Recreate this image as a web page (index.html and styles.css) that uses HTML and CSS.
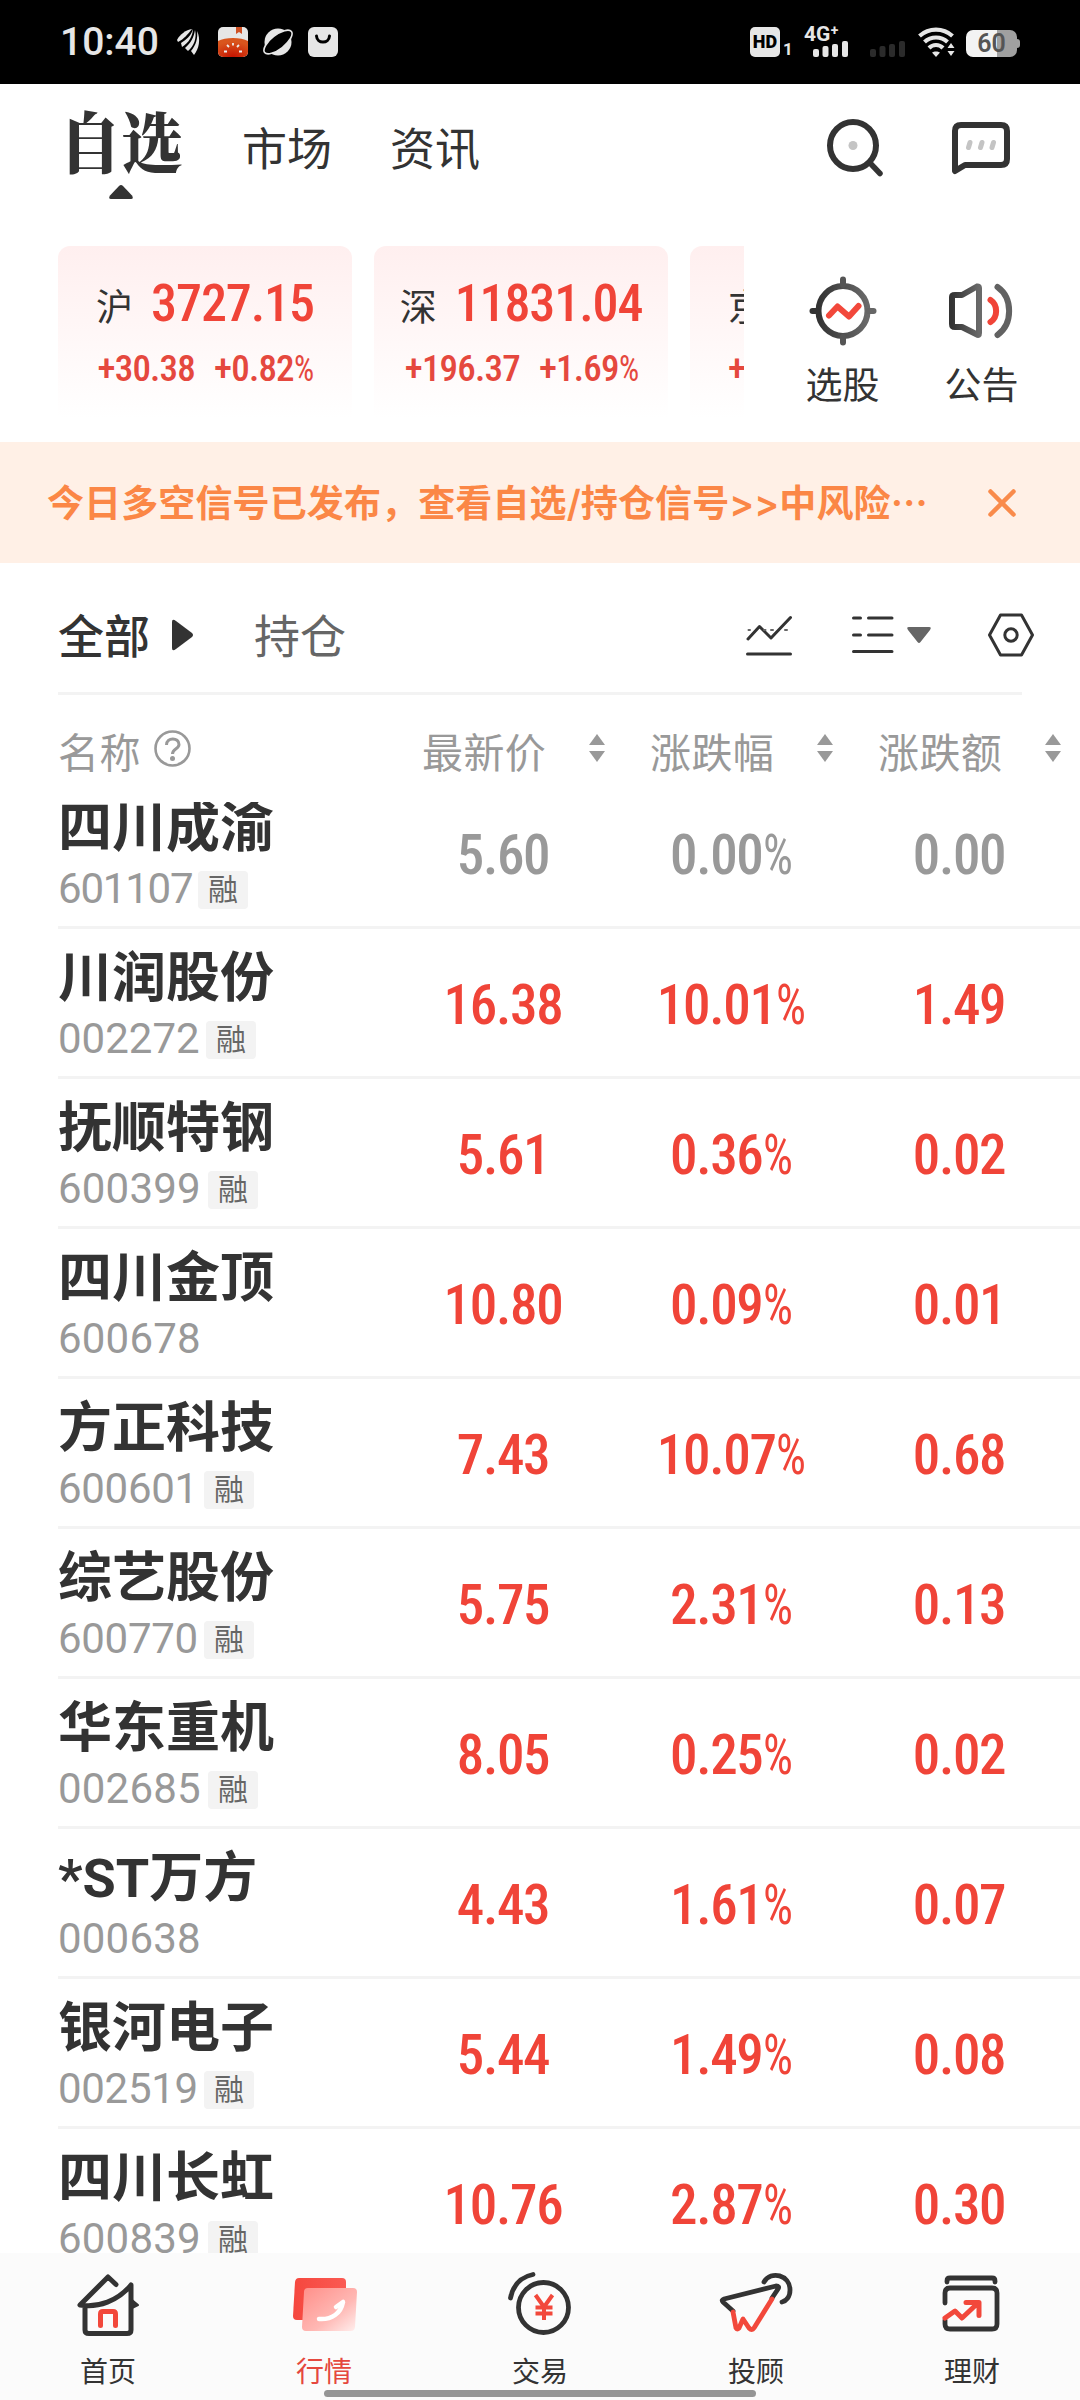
FILE: index.html
```html
<!DOCTYPE html>
<html lang="zh-CN">
<head>
   <meta charset="utf-8">
   <meta content="width=device-width, initial-scale=1.0" name="viewport">
   <title>自选</title>
   <link rel="stylesheet" href="styles.css">
</head>
<body>
   <div class="status">
      <span class="time">10:40</span>
      <svg class="s-bird" width="24" height="28" viewBox="0 0 24 28" fill="#e6e6e6">
         <path d="M0 12C3 6 9 2 15 1C11 6 7 11 1 14Z"/>
         <path d="M16 1C16 7 12 15 5 19L4 15C9 12 14 8 16 1Z"/>
         <path d="M18 2C20 10 17 18 11 23L8 20C14 15 17 9 18 2Z"/>
         <path d="M20 3C24 11 22 21 17 27L14 23C19 17 21 10 20 3Z"/>
      </svg>
      <svg class="s-book" width="30" height="30" viewBox="0 0 30 30">
         <defs>
            <radialGradient id="tomato" cx=".5" cy="1" r=".8"><stop offset="0" stop-color="#c41200"/><stop offset="1" stop-color="#d9551d"/></radialGradient>
            <clipPath id="bookclip"><rect width="30" height="30" rx="5"/></clipPath>
         </defs>
         <g clip-path="url(#bookclip)">
            <rect width="30" height="30" fill="#e6e6e6"/>
            <path d="M18 0H24V7L21 5L18 7Z" fill="#cf5124"/>
            <path d="M0 14C7 10 23 10 30 14V30H0Z" fill="url(#tomato)"/>
            <path d="M15 16V18.500M9 18L11 20M21 18L19 20M6 24.500H9M24 24.500H21" stroke="#eee" stroke-width="1.800"/>
         </g>
      </svg>
      <svg class="s-planet" width="30" height="28" viewBox="0 0 30 28">
         <circle cx="15" cy="14" r="13.500" fill="#e6e6e6"/>
         <ellipse cx="15" cy="14" rx="17" ry="7" transform="rotate(-38 15 14)" fill="#000" stroke="#e6e6e6" stroke-width="1.600"/>
      </svg>
      <svg class="s-bag" width="30" height="30" viewBox="0 0 30 30">
         <rect width="30" height="30" rx="6" fill="#e6e6e6"/>
         <path d="M8.500 9C9 17 21 17 21.500 9" fill="none" stroke="#000" stroke-width="3" stroke-linecap="round"/>
      </svg>
      <div class="status-right">
         <span class="hd">HD</span>
         <span class="sim">1</span>
         <div class="signal">
            <span>4G⁺</span>
            <svg width="35" height="16" viewBox="0 0 35 16" fill="#e6e6e6"><rect y="8" width="6" height="8" rx="2"/><rect x="9.500" y="5" width="6" height="11" rx="2"/><rect x="19" y="3" width="6" height="13" rx="2"/><rect x="29" width="6" height="16" rx="2"/></svg>
         </div>
         <svg class="s-dim" width="35" height="16" viewBox="0 0 35 16" fill="#2b2b2b"><rect y="8" width="6" height="8" rx="2"/><rect x="9.500" y="5" width="6" height="11" rx="2"/><rect x="19" y="3" width="6" height="13" rx="2"/><rect x="29" width="6" height="16" rx="2"/></svg>
         <svg class="s-wifi" width="37" height="30" viewBox="0 0 37 30">
            <g fill="none" stroke="#e6e6e6" stroke-width="4.200">
               <path d="M1.500 9C11 0.500 25 0.500 34.500 9"/>
               <path d="M6.500 15C13 9 23 9 29.500 15"/>
               <path d="M11 21C15 17 21 17 25 21"/>
            </g>
            <path d="M14 25.500C16 24 20 24 22 25.500L18 30Z" fill="#e6e6e6"/>
            <path d="M28 20L32.500 13L37 20V30H28Z" fill="#000"/>
            <path d="M29.500 21L33 16L36.500 21ZM29.500 24H36.500L33 29Z" fill="#e6e6e6"/>
         </svg>
         <div class="battery"><span>60</span></div>
         <i class="battery-tip"></i>
      </div>
   </div>

   <div class="nav">
      <div class="nav-item active">
         <span class="nav-title">自选</span>
         <svg width="24" height="14" viewBox="0 0 24 14"><path d="M10 1Q12-1 14 1L23 10.500Q25 14 22 14H2Q-1 14 1 10.500Z" fill="#333"/></svg>
      </div>
      <span class="nav-item market">市场</span>
      <span class="nav-item news">资讯</span>
      <svg class="search" width="60" height="62" viewBox="0 0 60 62" fill="none" stroke="#333" stroke-width="6">
         <ellipse cx="27" cy="28.500" rx="23" ry="23.500"/>
         <path d="M45 47L54 56.500" stroke-width="5.500" stroke-linecap="round"/>
         <circle cx="27" cy="28.500" r="4.500" fill="#c4c4c4" stroke="none"/>
      </svg>
      <svg class="chat" width="60" height="54" viewBox="0 0 60 54" fill="none" stroke="#333" stroke-width="6" stroke-linejoin="round">
         <path d="M4 50V10Q4 4 10 4H50Q56 4 56 10V38Q56 44 50 44H14Z"/>
         <path d="M19 21.500L17.500 26.500M31 21.500L29.500 26.500M42.500 21.500L41 26.500" stroke="#c4c4c4" stroke-width="5" stroke-linecap="round"/>
      </svg>
   </div>

   <div class="indices">
      <div class="cards">
         <div class="card">
            <div class="card-top"><span class="label">沪</span><span class="num point">3727.15</span></div>
            <div class="card-sub"><span class="num">+30.38</span><span class="num">+0.82<u>%</u></span></div>
         </div>
         <div class="card">
            <div class="card-top"><span class="label">深</span><span class="num point">11831.04</span></div>
            <div class="card-sub"><span class="num">+196.37</span><span class="num">+1.69<u>%</u></span></div>
         </div>
         <div class="card cut">
            <div class="card-top"><span class="label">京</span></div>
            <div class="card-sub"><span class="num">+</span></div>
         </div>
      </div>
      <div class="tool">
         <svg width="68" height="70" viewBox="0 0 68 70" fill="none" stroke-width="6" stroke-linecap="round">
            <defs><linearGradient id="ink"><stop offset="0" stop-color="#333"/><stop offset="1" stop-color="#6a6a6a"/></linearGradient></defs>
            <ellipse cx="34" cy="35" rx="24.500" ry="25" stroke="url(#ink)"/>
            <path d="M34 3.500V9M34 61V66.500" stroke="#555"/><path d="M3.500 35H8" stroke="#333"/><path d="M60 35H64.500" stroke="#666"/>
            <path d="M20 39.500L28.500 30.500L40 40.500L49.500 30" stroke="#f2483b" stroke-linejoin="round"/>
         </svg>
         <span>选股</span>
      </div>
      <div class="tool">
         <svg width="68" height="70" viewBox="0 0 68 70" fill="none" stroke-width="6" stroke-linecap="round" stroke-linejoin="round">
            <path d="M4 21Q4 19 7 19H14L29 10.500Q31 10 31 12V57Q31 60 29 58.500L14 51H7Q4 51 4 48Z" stroke="url(#ink)"/>
            <path d="M42.500 24C50 29 50 41 42.500 46" stroke="#f04438"/>
            <path d="M49.500 11C65 22 65 48 49.500 59" stroke="#626262"/>
         </svg>
         <span>公告</span>
      </div>
   </div>

   <div class="notice">
      <span>今日多空信号已发布，查看自选/持仓信号&gt;&gt;中风险<bdi>…</bdi></span>
      <svg width="28" height="28" viewBox="0 0 28 28" stroke="#f98b4b" stroke-width="4.500" stroke-linecap="round"><path d="M2.500 2.500L25.500 25.500M25.500 2.500L2.500 25.500"/></svg>
   </div>

   <div class="filter">
      <span class="all">全部</span>
      <svg class="play" width="21" height="32" viewBox="0 0 21 32"><path d="M0 3Q0-1 4 2L20 14Q22 16 20 18L4 30Q0 33 0 29Z" fill="#333"/></svg>
      <span class="hold">持仓</span>
      <svg class="chart" width="46" height="42" viewBox="0 0 46 42" fill="none" stroke="#333" stroke-width="3" stroke-linecap="round" stroke-linejoin="round">
         <path d="M1.500 40H44.500M2 25L13.500 12.500L25 24L44.500 3.500"/>
         <path d="M2.500 16H4M18 16H19.500M25 16H27M39 16H41" stroke="#666" stroke-width="2"/>
      </svg>
      <svg class="list" width="42" height="40" viewBox="0 0 42 40" stroke="#333" stroke-width="3" stroke-linecap="round"><path d="M1.500 3H8.500M16.500 3H40M1.500 20H8.500M16.500 20H40M1.500 36.500H40"/></svg>
      <svg class="down" width="24" height="17" viewBox="0 0 24 17"><path d="M2 0H22Q25 0 23 3L13.500 15Q12 17 10.500 15L1 3Q-1 0 2 0Z" fill="#666"/></svg>
      <svg class="hex" width="46" height="44" viewBox="0 0 46 44" fill="none" stroke="#333" stroke-width="3" stroke-linejoin="round"><path d="M12.500 2H33.500L44.500 22L33.500 42H12.500L1.500 22Z"/><circle cx="23" cy="22" r="6.200"/></svg>
   </div>

   <div class="thead">
      <div class="th-name"><span>名称</span>
         <svg width="37" height="37" viewBox="0 0 37 37" fill="none" stroke="#999" stroke-width="2.600"><circle cx="18.500" cy="18.500" r="17"/><path d="M12.500 15C12.500 7 25 7 25 14.500C25 19 18.500 18.500 18.500 24" stroke-width="3"/><circle cx="18.500" cy="28.500" r="2.500" fill="#999" stroke="none"/></svg>
      </div>
      <div class="th"><span>最新价</span><i class="sort"></i></div>
      <div class="th"><span>涨跌幅</span><i class="sort"></i></div>
      <div class="th"><span>涨跌额</span><i class="sort"></i></div>
   </div>

   <div class="list-wrap">
      <div class="row flat first">
         <div class="stock"><b>四川成渝</b><p><span class="code c198">601107</span><em>融</em></p></div>
         <span class="num">5.60</span><span class="num">0.00<u>%</u></span><span class="num">0.00</span>
      </div>
      <div class="row">
         <div class="stock"><b>川润股份</b><p><span class="code c206">002272</span><em>融</em></p></div>
         <span class="num">16.38</span><span class="num">10.01<u>%</u></span><span class="num">1.49</span>
      </div>
      <div class="row">
         <div class="stock"><b>抚顺特钢</b><p><span class="code">600399</span><em>融</em></p></div>
         <span class="num">5.61</span><span class="num">0.36<u>%</u></span><span class="num">0.02</span>
      </div>
      <div class="row">
         <div class="stock"><b>四川金顶</b><p><span class="code">600678</span></p></div>
         <span class="num">10.80</span><span class="num">0.09<u>%</u></span><span class="num">0.01</span>
      </div>
      <div class="row">
         <div class="stock"><b>方正科技</b><p><span class="code c204">600601</span><em>融</em></p></div>
         <span class="num">7.43</span><span class="num">10.07<u>%</u></span><span class="num">0.68</span>
      </div>
      <div class="row">
         <div class="stock"><b>综艺股份</b><p><span class="code c204">600770</span><em>融</em></p></div>
         <span class="num">5.75</span><span class="num">2.31<u>%</u></span><span class="num">0.13</span>
      </div>
      <div class="row">
         <div class="stock"><b>华东重机</b><p><span class="code">002685</span><em>融</em></p></div>
         <span class="num">8.05</span><span class="num">0.25<u>%</u></span><span class="num">0.02</span>
      </div>
      <div class="row">
         <div class="stock"><b>*ST万方</b><p><span class="code">000638</span></p></div>
         <span class="num">4.43</span><span class="num">1.61<u>%</u></span><span class="num">0.07</span>
      </div>
      <div class="row">
         <div class="stock"><b>银河电子</b><p><span class="code c204">002519</span><em>融</em></p></div>
         <span class="num">5.44</span><span class="num">1.49<u>%</u></span><span class="num">0.08</span>
      </div>
      <div class="row">
         <div class="stock"><b>四川长虹</b><p><span class="code">600839</span><em>融</em></p></div>
         <span class="num">10.76</span><span class="num">2.87<u>%</u></span><span class="num">0.30</span>
      </div>
   </div>

   <div class="tabbar">
      <div class="tab">
         <svg width="76" height="76" viewBox="0 0 76 76" fill="none" stroke="#333" stroke-width="5" stroke-linecap="round" stroke-linejoin="round">
            <path d="M46 19.500L38 12L10 40C28 43 48 36 61 20V65Q61 68.500 57 68.500H19Q15 68.500 15 65V42"/>
            <path d="M62 35L68 40L62 43Z" fill="#333" stroke-width="2"/>
            <path d="M30.500 60.500V49Q30.500 46.500 33 46.500H43Q45.500 46.500 45.500 49V60.500" stroke="#f2483b"/>
         </svg>
         <span>首页</span>
      </div>
      <div class="tab on">
         <svg width="76" height="76" viewBox="0 0 76 76">
            <defs>
               <linearGradient id="front" x1="0" y1="0" x2="1" y2="1"><stop offset="0" stop-color="#ff8f89"/><stop offset=".6" stop-color="#ffb8b4"/><stop offset="1" stop-color="#fff0ef"/></linearGradient>
               <linearGradient id="back" x1="0" y1="0" x2="1" y2="0"><stop offset="0" stop-color="#f5473e"/><stop offset="1" stop-color="#fb5a53"/></linearGradient>
            </defs>
            <path d="M13 13H56Q60 13 60 17V55H11Q7 55 7 51L9 17Q9.500 13 13 13Z" fill="url(#back)"/>
            <path d="M22 23H67Q71 23 71 27L69 62Q68.500 66 65 66H20Q16 66 16 62L18 27Q18 23 22 23Z" fill="url(#front)"/>
            <path d="M33 54C46 55 55 48 57 37M57 37L50 42" fill="none" stroke="#fff" stroke-width="4.500" stroke-linecap="round"/>
         </svg>
         <span>行情</span>
      </div>
      <div class="tab">
         <svg width="76" height="76" viewBox="0 0 76 76" fill="none" stroke="#333" stroke-width="4.800" stroke-linecap="round">
            <circle cx="41.500" cy="42.500" r="25"/><path d="M8.500 33C11 20 19 12 31 9.500"/>
            <path d="M33.500 30L42 42L50.500 30M42 42V55M33.500 42.500H50.500M33.500 48.500H50.500" stroke="#f2483b" stroke-width="4" stroke-linecap="butt"/>
         </svg>
         <span>交易</span>
      </div>
      <div class="tab">
         <svg width="76" height="76" viewBox="0 0 76 76" fill="none" stroke="#333" stroke-width="4.800" stroke-linecap="round" stroke-linejoin="round">
            <path d="M15 46L5 37Q3 35 6 34L58 21Q62 21 60 24L54 33"/>
            <path d="M15 47L18 63Q19 65 21 63L25 54L31 63Q34 66 36 63L54 34" stroke="#f2483b"/>
            <path d="M46 17C53 5 72 10 72 25C72 32 68 36 64 37"/>
         </svg>
         <span>投顾</span>
      </div>
      <div class="tab">
         <svg width="76" height="76" viewBox="0 0 76 76" fill="none" stroke="#333" stroke-width="4.800" stroke-linecap="round" stroke-linejoin="round">
            <path d="M13 17V16Q13 13 16 13H58Q61 13 61 16V17M11 38V28Q11 23 16 23H58Q63 23 63 28V59Q63 64 58 64H16Q11 64 11 59V55"/>
            <path d="M11 53L21 46L28 53L44 38M32 37.500H45V50.500" stroke="#f2483b" stroke-width="5"/>
         </svg>
         <span>理财</span>
      </div>
      <i class="home-bar"></i>
   </div>
</body>
</html>
```
FILE: styles.css
```css
* {
    margin: 0;
    padding: 0;
    box-sizing: border-box;
}
body {
    width: 1080px;
    height: 2400px;
    overflow: hidden;
    background: #fff;
    color: #333;
    font-family: Roboto, "Noto Sans CJK SC", sans-serif;
}
svg {
    display: block;
    flex: none;
}
i, em {
    font-style: normal;
}
.num {
    font-stretch: 75%;
    font-weight: 500;
    letter-spacing: -1.1px;
    color: #f04438;
    white-space: nowrap;
}

/* status bar */
.status {
    height: 84px;
    background: #000;
    color: #e6e6e6;
    display: flex;
    align-items: center;
    padding-left: 60px;
}
.time {
    font-size: 39px;
    font-weight: 500;
    width: 117px;
}
.s-book {
    margin-left: 17px;
}
.s-planet, .s-bag {
    margin-left: 15px;
}
.status-right {
    display: flex;
    align-items: flex-end;
    height: 30px;
    margin-left: auto;
    padding-right: 60px;
}
.hd {
    width: 30px;
    height: 30px;
    border-radius: 5px;
    background: #e6e6e6;
    color: #000;
    font-size: 18px;
    font-weight: 900;
    line-height: 30px;
    text-align: center;
}
.sim {
    font-size: 17px;
    font-weight: 700;
    line-height: 15px;
    width: 24px;
    padding-left: 3px;
}
.signal span {
    display: block;
    font-size: 21px;
    font-weight: 700;
    line-height: 14px;
    height: 14px;
}
.signal {
    width: 44px;
}
.signal svg {
    margin-left: 9px;
}
.s-dim {
    margin-left: 22px;
}
.s-wifi {
    margin-left: 13px;
}
.battery {
    width: 51px;
    height: 27px;
    margin-left: 11px;
    border-radius: 7px;
    background: linear-gradient(90deg, #f3f3f3 61%, #a0a0a0 61%);
    color: #555;
    font-size: 25px;
    font-weight: 600;
    line-height: 28px;
    text-align: center;
}
.battery-tip {
    width: 3px;
    height: 9px;
    margin-bottom: 9px;
    background: #a0a0a0;
    border-radius: 0 3px 3px 0;
}

/* top navigation */
.nav {
    height: 162px;
    display: flex;
    align-items: flex-start;
    padding-left: 64px;
}
.nav-item {
    font-size: 45px;
    line-height: 60px;
}
.active {
    width: 114px;
    display: flex;
    flex-direction: column;
    align-items: center;
}
.nav-title {
    font-family: "Noto Serif CJK SC", "Noto Sans CJK SC", serif;
    font-size: 67px;
    font-weight: 900;
    line-height: 80px;
    white-space: nowrap;
    transform: scaleX(.92);
    margin: 15px 0 6px;
}
.market, .news {
    margin: 37px 0 0 64px;
}
.news {
    margin-left: 58px;
}
.search {
    margin: 33px 0 0 auto;
}
.chat {
    margin: 37px 69px 0 65px;
}

/* index cards */
.indices {
    height: 196px;
    display: flex;
    padding-left: 58px;
}
.cards {
    width: 686px;
    display: flex;
    gap: 22px;
    overflow: hidden;
    margin-right: 29px;
}
.card {
    flex: none;
    width: 294px;
    height: 181px;
    border-radius: 12px;
    background: linear-gradient(#ffefef, #fff 95%);
}
.card-top {
    height: 80px;
    padding-top: 34px;
    display: flex;
    justify-content: center;
    align-items: center;
    gap: 18px;
}
.label {
    font-size: 37px;
    padding-top: 4px;
}
.point {
    font-size: 52px;
}
.card-sub {
    display: flex;
    justify-content: center;
    gap: 19px;
    padding-top: 21px;
    font-size: 37px;
    line-height: 44px;
}
.card-sub .num {
    color: #e5483e;
    letter-spacing: -.8px;
}
.cut .card-top, .cut .card-sub {
    justify-content: flex-start;
    padding-left: 38px;
}
.tool {
    width: 139px;
    padding-top: 30px;
    display: flex;
    flex-direction: column;
    align-items: center;
    font-size: 37px;
    line-height: 54px;
}
.tool svg {
    margin-bottom: 14px;
}

/* notice */
.notice {
    height: 121px;
    background: #fff0e6;
    display: flex;
    align-items: center;
    justify-content: space-between;
    padding: 0 64px 0 47px;
    font-family: Inter, "Noto Sans CJK SC", sans-serif;
    font-size: 37px;
    font-weight: 600;
    letter-spacing: .12px;
    color: #fb8746;
}
.notice span {
    margin-top: -3px;
}
.notice bdi {
    font-family: "Noto Sans CJK SC", sans-serif;
}

/* filter row */
.filter {
    height: 132px;
    margin: 0 0 0 58px;
    padding-top: 12px;
    display: flex;
    align-items: center;
    font-size: 46px;
    background: linear-gradient(#f3f3f3, #f3f3f3) 0 129px / 964px 3px no-repeat;
}
.all, .hold {
    margin-top: -4px;
}
.all {
    font-weight: 500;
}
.play {
    margin: 0 61px 0 22px;
}
.hold {
    color: #666;
}
.chart {
    margin-left: auto;
}
.list {
    margin-left: 60px;
}
.down {
    margin-left: 13px;
}
.hex {
    margin: 0 46px 0 57px;
}

/* table head */
.thead {
    height: 107px;
    padding-left: 58px;
    display: flex;
    font-size: 41px;
    color: #999;
}
.th-name {
    flex: none;
    width: 364px;
    display: flex;
    align-items: center;
    gap: 13px;
}
.thead span {
    padding-top: 3px;
    letter-spacing: .4px;
}
.th-name svg {
    margin-bottom: 1px;
}
.th {
    flex: none;
    width: 228px;
    display: flex;
    align-items: center;
}
.sort {
    margin: 0 0 2px 43px;
}
.sort::before, .sort::after {
    content: "";
    display: block;
    border: 8px solid transparent;
    border-top-width: 0;
    border-bottom: 11px solid #999;
}
.sort::after {
    margin-top: 6px;
    border-bottom-width: 0;
    border-top: 11px solid #999;
}

/* stock rows */
.list-wrap {
    height: 1451px;
    overflow: hidden;
}
.row {
    height: 150px;
    margin-left: 58px;
    border-bottom: 3px solid #f3f3f3;
    display: flex;
}
.first {
    margin-top: -23px;
}
.row .num {
    width: 228px;
    font-size: 55px;
    line-height: 153px;
    letter-spacing: -1.3px;
    text-align: center;
}
.flat .num {
    color: #999;
}
.num u {
    text-decoration: none;
    display: inline-block;
    font-weight: 400;
    transform: scaleX(.86);
    transform-origin: left;
    margin-right: -4px;
}
.stock {
    width: 331px;
}
.stock b {
    display: block;
    font-size: 54px;
    line-height: 64px;
    padding-top: 18px;
}
.stock p {
    display: flex;
    align-items: center;
    height: 38px;
    margin-top: 10px;
}
.code {
    width: 150px;
    font-size: 42px;
    line-height: 36px;
    margin-top: -2px;
    letter-spacing: .2px;
    color: #999;
}
.c198 {
    width: 140px;
    letter-spacing: -1.2px;
}
.c204 {
    width: 146px;
    letter-spacing: -.3px;
}
.c206 {
    width: 148px;
    letter-spacing: 0;
}
.stock em {
    width: 50px;
    height: 38px;
    border-radius: 4px;
    background: #f3f3f3;
    color: #666;
    font-size: 30px;
    line-height: 38px;
    text-align: center;
}

/* bottom tabs */
.tabbar {
    position: relative;
    height: 147px;
    background: #fbfbfb;
    display: flex;
}
.tab {
    width: 216px;
    padding-top: 12px;
    display: flex;
    flex-direction: column;
    align-items: center;
    font-size: 28px;
    line-height: 40px;
}
.tab svg {
    margin-bottom: 12px;
}
.on {
    color: #e5483e;
}
.home-bar {
    position: absolute;
    left: 324px;
    top: 137px;
    width: 432px;
    height: 7px;
    border-radius: 4px;
    background: #959595;
}
```
